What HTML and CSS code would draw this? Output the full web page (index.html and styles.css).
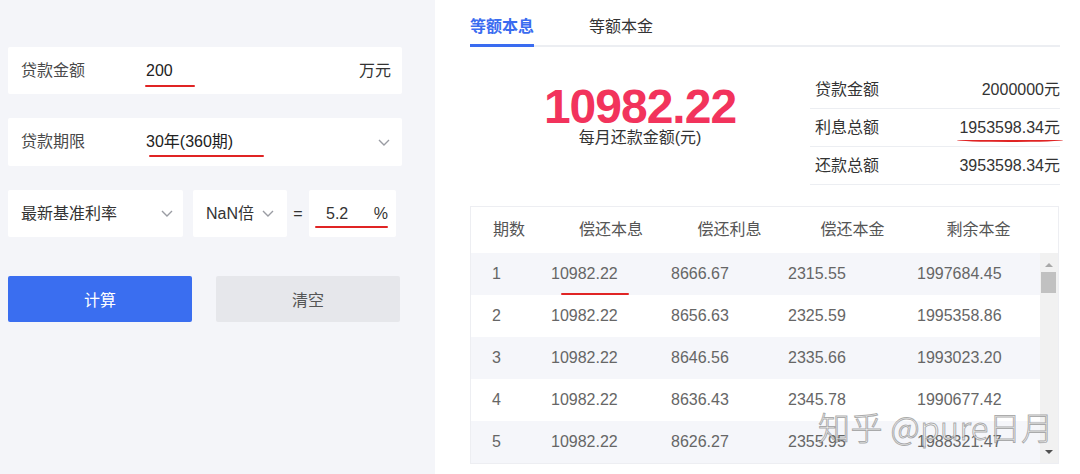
FILE: index.html
```html
<!DOCTYPE html>
<html lang="zh-CN">
<head>
<meta charset="utf-8">
<title>房贷计算器</title>
<link rel="stylesheet" href="styles.css">
</head>
<body>
<div class="page">
  <aside class="form">
    <div class="field">
      <span class="label">贷款金额</span>
      <span class="value"><span class="mark mark-amount">200</span></span>
      <span class="unit">万元</span>
    </div>
    <div class="field field-term">
      <span class="label">贷款期限</span>
      <span class="value"><span class="mark mark-term">30年(360期)</span></span>
      <svg class="chev" viewBox="0 0 12 7"><path d="M1 1 L6 6 L11 1" fill="none" stroke="#9a9ca3" stroke-width="1.4"/></svg>
    </div>
    <div class="rate-row">
      <div class="box select-base"><span class="box-text">最新基准利率</span><svg class="chev" viewBox="0 0 12 7"><path d="M1 1 L6 6 L11 1" fill="none" stroke="#9a9ca3" stroke-width="1.4"/></svg></div>
      <div class="box select-mult"><span class="box-text">NaN倍</span><svg class="chev" viewBox="0 0 12 7"><path d="M1 1 L6 6 L11 1" fill="none" stroke="#9a9ca3" stroke-width="1.4"/></svg></div>
      <span class="eq">=</span>
      <div class="box rate-input"><span class="mark mark-rate">5.2</span><span class="box-text">%</span></div>
    </div>
    <div class="actions">
      <button class="btn primary">计算</button>
      <button class="btn ghost">清空</button>
    </div>
  </aside>

  <main class="result">
    <nav class="tabs">
      <span class="tab active">等额本息</span>
      <span class="tab">等额本金</span>
    </nav>

    <section class="summary">
      <div class="big">
        <div class="amount">10982.22</div>
        <div class="amount-label">每月还款金额(元)</div>
      </div>
      <div class="stats">
        <div class="stat"><span>贷款金额</span><span>2000000元</span></div>
        <div class="stat"><span>利息总额</span><span class="mark mark-interest">1953598.34元</span></div>
        <div class="stat"><span>还款总额</span><span>3953598.34元</span></div>
      </div>
    </section>

    <section class="table">
      <div class="thead">
        <span class="th first">期数</span>
        <span class="th">偿还本息</span>
        <span class="th">偿还利息</span>
        <span class="th">偿还本金</span>
        <span class="th">剩余本金</span>
      </div>
      <div class="tbody">
        <div class="rows">
          <div class="row"><span class="td first">1</span><span class="td"><span class="mark mark-cell">10982.22</span></span><span class="td">8666.67</span><span class="td">2315.55</span><span class="td">1997684.45</span></div>
          <div class="row"><span class="td first">2</span><span class="td">10982.22</span><span class="td">8656.63</span><span class="td">2325.59</span><span class="td">1995358.86</span></div>
          <div class="row"><span class="td first">3</span><span class="td">10982.22</span><span class="td">8646.56</span><span class="td">2335.66</span><span class="td">1993023.20</span></div>
          <div class="row"><span class="td first">4</span><span class="td">10982.22</span><span class="td">8636.43</span><span class="td">2345.78</span><span class="td">1990677.42</span></div>
          <div class="row"><span class="td first">5</span><span class="td">10982.22</span><span class="td">8626.27</span><span class="td">2355.95</span><span class="td">1988321.47</span></div>
        </div>
        <div class="scrollbar">
          <span class="sb-up"></span>
          <span class="sb-thumb"></span>
          <span class="sb-down"></span>
        </div>
      </div>
    </section>

    <div class="watermark">知乎 @pure日月</div>
  </main>
</div>
</body>
</html>
```

FILE: styles.css
```css
* {
  box-sizing: border-box;
  margin: 0;
  padding: 0;
}

body {
  font-family: "Liberation Sans", "Noto Sans CJK SC", sans-serif;
  font-size: 16px;
  color: #333;
  background: #fff;
  overflow: hidden;
}

.page {
  display: flex;
  height: 474px;
}

/* ---------- left form ---------- */
.form {
  width: 435px;
  flex: none;
  background: #f4f5f9;
  padding: 47px 0 0 8px;
  display: flex;
  flex-direction: column;
}

.field {
  width: 394px;
  height: 47px;
  background: #fff;
  display: flex;
  align-items: center;
  padding: 0 11px 0 13px;
  border-radius: 2px;
}

.field-term {
  margin-top: 24px;
  height: 48px;
  padding-right: 12px;
}

.label {
  width: 125px;
  color: #4a4a4a;
  line-height: 20px;
}

.value {
  flex: 1;
  color: #222;
  line-height: 20px;
}

.unit {
  color: #333;
  line-height: 20px;
}

.chev {
  width: 12px;
  height: 7px;
  flex: none;
}

.rate-row {
  display: flex;
  align-items: center;
  margin-top: 24px;
  height: 47px;
}

.box {
  height: 47px;
  background: #fff;
  display: flex;
  align-items: center;
  border-radius: 2px;
}

.box-text {
  color: #333;
  line-height: 20px;
}

.select-base {
  width: 175px;
  padding: 0 10px 0 13px;
  justify-content: space-between;
}

.select-mult {
  width: 94px;
  margin-left: 10px;
  padding-left: 13px;
  gap: 8px;
}

.eq {
  width: 22px;
  text-align: center;
  color: #333;
}

.rate-input {
  width: 87px;
  padding: 0 8px 0 17px;
  justify-content: space-between;
}

.actions {
  display: flex;
  gap: 24px;
  margin-top: 39px;
}

.btn {
  width: 184px;
  height: 46px;
  border: none;
  border-radius: 2px;
  font: inherit;
  font-size: 16px;
}

.primary {
  background: #3a6ef0;
  color: #fff;
}

.ghost {
  background: #e6e7eb;
  color: #555;
}

/* ---------- red annotation lines ---------- */
.mark {
  position: relative;
  display: inline-block;
  line-height: 20px;
}

.mark::after {
  content: "";
  position: absolute;
  height: 2px;
  background: #e02424;
  border-radius: 1px;
}

.mark-amount::after {
  left: -1px;
  width: 50px;
  top: 24px;
}

.mark-term::after {
  left: 3px;
  width: 115px;
  top: 23px;
}

.mark-rate::after {
  left: -11px;
  width: 73px;
  top: 22px;
}

.mark-interest::after {
  left: -2px;
  right: -3px;
  top: 22px;
  border-radius: 0 0 50% 50% / 0 0 2px 2px;
}

.mark-cell::after {
  left: 10px;
  width: 68px;
  top: 29px;
}

/* ---------- right result ---------- */
.result {
  flex: 1;
  padding: 0 20px 0 35px;
  position: relative;
}

.tabs {
  display: flex;
  gap: 55px;
  height: 47px;
  border-bottom: 2px solid #eceef2;
}

.tab {
  position: relative;
  padding-top: 16px;
  line-height: 22px;
  color: #333;
}

.tab.active {
  color: #3a6cf0;
  font-weight: bold;
}

.tab.active::after {
  content: "";
  position: absolute;
  left: 0;
  right: 0;
  bottom: -2px;
  height: 3px;
  background: #3a6cf0;
}

.summary {
  display: flex;
  height: 138px;
}

.big {
  flex: 1;
  display: flex;
  flex-direction: column;
  align-items: center;
  padding-top: 38px;
}

.amount {
  font-size: 48px;
  font-weight: bold;
  color: #f2335c;
  line-height: 44px;
  letter-spacing: -1px;
}

.amount-label {
  line-height: 18px;
  color: #333;
}

.stats {
  width: 250px;
  margin-top: 24px;
}

.stat {
  display: flex;
  justify-content: space-between;
  align-items: center;
  height: 38px;
  border-bottom: 1px solid #eceef2;
  padding-left: 5px;
  color: #333;
}

.stat span {
  line-height: 20px;
}

/* ---------- table ---------- */
.table {
  margin-top: 21px;
  width: 589px;
  border: 1px solid #edeef2;
}

.thead,
.row {
  display: grid;
  grid-template-columns: 80px 120px 117px 129px 123px;
  align-items: center;
}

.thead {
  height: 46px;
  color: #555;
}

.th {
  text-align: center;
  line-height: 20px;
}

.th.first,
.td.first {
  text-align: left;
  padding-left: 21px;
}

.th.first {
  padding-left: 22px;
}

.tbody {
  display: flex;
}

.rows {
  width: 569px;
}

.row {
  height: 42px;
  color: #666;
}

.row:nth-child(odd) {
  background: #f5f6fa;
}

.td {
  line-height: 20px;
}

.scrollbar {
  width: 18px;
  background: #f1f1f1;
  display: flex;
  flex-direction: column;
  align-items: center;
}

.sb-up {
  margin-top: 10px;
  width: 0;
  height: 0;
  border-left: 4px solid transparent;
  border-right: 4px solid transparent;
  border-bottom: 4px solid #a8a8a8;
}

.sb-thumb {
  margin-top: 5px;
  align-self: flex-start;
  margin-left: 1px;
  width: 15px;
  height: 21px;
  background: #c1c1c1;
}

.sb-down {
  margin-top: auto;
  margin-bottom: 9px;
  width: 0;
  height: 0;
  border-left: 4px solid transparent;
  border-right: 4px solid transparent;
  border-top: 4px solid #505050;
}

/* ---------- watermark overlay ---------- */
.watermark {
  position: absolute;
  left: 383px;
  top: 404px;
  font-family: "Noto Sans CJK SC", "Liberation Sans", sans-serif;
  font-size: 32px;
  font-weight: 300;
  line-height: 44px;
  letter-spacing: 0.5px;
  white-space: nowrap;
  color: rgba(255, 255, 255, 0.8);
  -webkit-text-stroke: 1px rgba(90, 90, 90, 0.5);
  pointer-events: none;
}
```
